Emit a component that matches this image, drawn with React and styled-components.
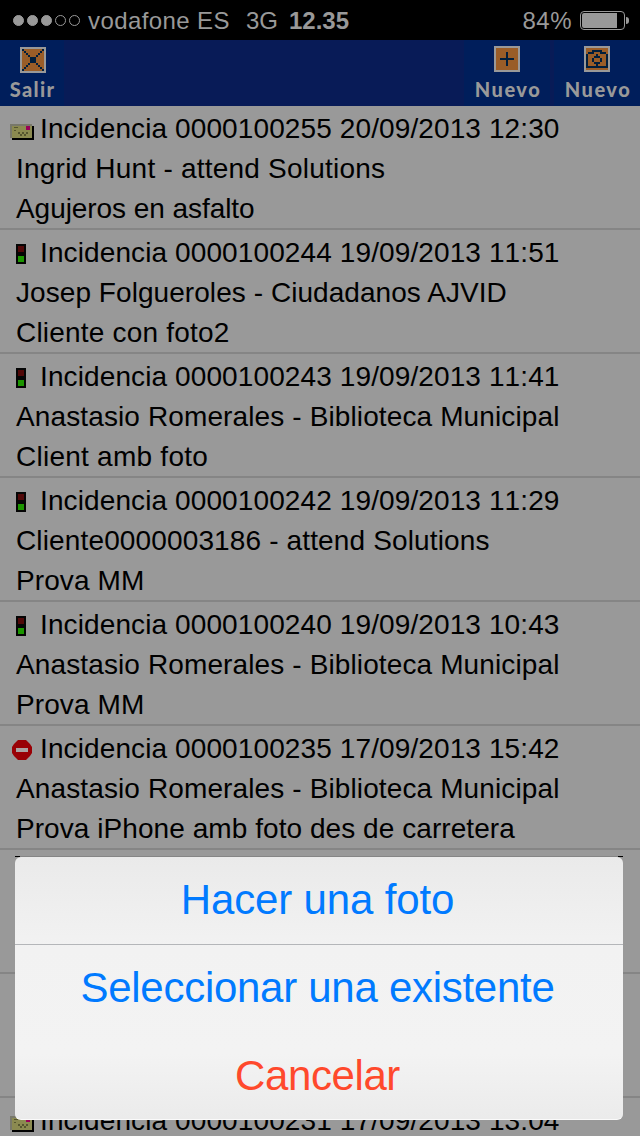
// react
import React from 'react';
// styled components
import styled, { createGlobalStyle } from 'styled-components';

// DATA
const incidents = [
    { id: '0000100255', date: '20/09/2013 12:30', icon: 'mail', client: 'Ingrid Hunt - attend Solutions', clientGap: 0.22, note: 'Agujeros en asfalto', noteGap: -0.06 },
    { id: '0000100244', date: '19/09/2013 11:51', icon: 'light', client: 'Josep Folgueroles - Ciudadanos AJVID', clientGap: 0.06, note: 'Cliente con foto2', noteGap: 0.2 },
    { id: '0000100243', date: '19/09/2013 11:41', icon: 'light', client: 'Anastasio Romerales - Biblioteca Municipal', clientGap: 0.12, note: 'Client amb foto', noteGap: 0.25 },
    { id: '0000100242', date: '19/09/2013 11:29', icon: 'light', client: 'Cliente0000003186 - attend Solutions', clientGap: 0.14, note: 'Prova MM', noteGap: 0.1 },
    { id: '0000100240', date: '19/09/2013 10:43', icon: 'light', client: 'Anastasio Romerales - Biblioteca Municipal', clientGap: 0.12, note: 'Prova MM', noteGap: 0.1 },
    { id: '0000100235', date: '17/09/2013 15:42', icon: 'stop', client: 'Anastasio Romerales - Biblioteca Municipal', clientGap: 0.12, note: 'Prova iPhone amb foto des de carretera', noteGap: 0.06 },
    { id: null },
    { id: null },
    { id: '0000100231', date: '17/09/2013 13:04', icon: 'mail' },
];

// ICONS
const MailIcon = () => (
    <svg width="24" height="16" shapeRendering="crispEdges">
        <path d="M2 2h22v14H2z" fill="#000" />
        <path d="M0 0h22v14H0z" fill="#8b8a50" />
        <path d="M0 0h22v2H0zM0 0h2v14H0z" fill="#78786a" />
        <path d="M16 2h4v4h-4z" fill="#990057" />
        <path d="M4 3h4v1H4zM4 6h2v1H4zM8 8h2v2H8zM12 8h2v2h-2zM16 8h2v2h-2zM10 10h2v2h-2zM14 10h2v2h-2z" fill="#55552f" />
    </svg>
);

const LightIcon = () => (
    <svg width="10" height="20" shapeRendering="crispEdges">
        <path d="M0 0h10v20H0z" fill="#050505" />
        <path d="M2 2h6v6H2z" fill="#510808" />
        <path d="M2 12h6v6H2z" fill="#1c9600" />
    </svg>
);

const StopIcon = () => (
    <svg width="20" height="20">
        <path d="M6 0h8l2 2 2 2 2 3v6l-2 3-2 2-2 2H6l-2-2-2-2-2-3V7l2-3 2-2z" fill="#990005" />
        <path d="M4 8h12v4H4z" fill="#aaa1a1" />
    </svg>
);

const rowIcons = { mail: MailIcon, light: LightIcon, stop: StopIcon };

const ExitIcon = () => (
    <svg width="26" height="26" shapeRendering="crispEdges">
        <path d="M0 0h26v26H0z" fill="#999" />
        <path d="M2 2h22v22H2z" fill="#995d28" />
        <path
            d="M2 2h2v2H2zM4 4h2v2H4zM6 6h2v2H6zM8 8h2v2H8zM22 2h2v2h-2zM20 4h2v2h-2zM18 6h2v2h-2zM16 8h2v2h-2zM10 10h6v6h-6zM8 16h2v2H8zM6 18h2v2H6zM4 20h2v2H4zM2 22h2v2H2zM16 16h2v2h-2zM18 18h2v2h-2zM20 20h2v2h-2zM22 22h2v2h-2z"
            fill="#001e3c"
        />
    </svg>
);

const PlusIcon = () => (
    <svg width="26" height="26" shapeRendering="crispEdges">
        <path d="M0 0h26v26H0z" fill="#999" />
        <path d="M2 2h22v22H2z" fill="#995d28" />
        <path d="M12 6h2v14h-2zM6 12h14v2H6z" fill="#001e3c" />
    </svg>
);

const CameraIcon = () => (
    <svg width="26" height="26" shapeRendering="crispEdges">
        <path d="M0 0h26v26H0z" fill="#999" />
        <path d="M2 2h22v22H2z" fill="#995d28" />
        <path
            d="M8 4h10v2H8zM4 6h6v2H4zM16 6h6v2h-6zM2 8h2v14H2zM22 8h2v14h-2zM4 20h18v2H4zM10 10h6v2h-6zM8 12h2v4H8zM16 12h2v4h-2zM10 16h6v2h-6zM12 8h2v2h-2zM12 18h2v2h-2z"
            fill="#001e3c"
        />
    </svg>
);

// COMPONENT
const App = () => {
    return (
        <Screen>
            <GlobalStyle />
            <StatusBar>
                <Signal>
                    {[1, 1, 1, 0, 0].map((on, i) => (
                        <Dot key={i} $on={on} />
                    ))}
                </Signal>
                <Carrier>vodafone ES</Carrier>
                <Network>3G</Network>
                <Clock>12.35</Clock>
                <Percent>84%</Percent>
                <Battery>
                    <BatteryLevel />
                </Battery>
                <BatteryTip />
            </StatusBar>
            <Toolbar>
                <ToolButton $width={64} $top={7} $indent={2}>
                    <ExitIcon />
                    <ToolLabel $spacing={1.3} $top={4} $right={1}>Salir</ToolLabel>
                </ToolButton>
                <Spacer />
                <ToolButton $width={86} $top={6}>
                    <PlusIcon />
                    <ToolLabel $spacing={1.5} $top={5} $left={2}>Nuevo</ToolLabel>
                </ToolButton>
                <ToolButton $width={86} $top={6}>
                    <CameraIcon />
                    <ToolLabel $spacing={1.5} $top={5} $left={2}>Nuevo</ToolLabel>
                </ToolButton>
            </Toolbar>
            <List>
                {incidents.map((incident, i) => {
                    const Icon = rowIcons[incident.icon];
                    return (
                        <Row key={i}>
                            {incident.id && (
                                <Title>
                                    <IconSlot $kind={incident.icon}><Icon /></IconSlot>
                                    <Line>Incidencia {incident.id} {incident.date}</Line>
                                </Title>
                            )}
                            <Detail $spacing={incident.clientGap}>{incident.client}</Detail>
                            <Detail $spacing={incident.noteGap}>{incident.note}</Detail>
                        </Row>
                    );
                })}
            </List>
            <SheetEdge />
            <ActionSheet>
                <Action $height={87} $spacing={-0.15}>Hacer una foto</Action>
                <Action $height={89} $divided $spacing={-0.28}>Seleccionar una existente</Action>
                <Action $height={87} $danger $spacing={-0.4}>Cancelar</Action>
            </ActionSheet>
        </Screen>
    );
};

// STYLED COMPONENTS
const GlobalStyle = createGlobalStyle`
    body {
        margin: 0;
        overflow: hidden;
        background: #999;
    }

    * {
        box-sizing: border-box;
    }

    svg {
        display: block;
        flex: none;
    }
`

const Screen = styled.div`
    position: relative;
    width: 640px;
    height: 1136px;
    overflow: hidden;
    background: #999;
    color: #000;
    font-family: "Liberation Sans", Arial, sans-serif;
`

const StatusBar = styled.div`
    height: 40px;
    padding: 1px 11px 0 13px;
    display: flex;
    align-items: center;
    background: #000;
    color: #999;
    font-size: 24px;
    white-space: nowrap;
`

const Signal = styled.div`
    width: 75px;
    display: flex;
    gap: 3px;
`

const Dot = styled.span`
    width: 11px;
    height: 11px;
    border: 1px solid #999;
    border-radius: 50%;
    background: ${props => (props.$on ? '#999' : 'transparent')};
`

const Carrier = styled.span`
    width: 158px;
    letter-spacing: 0.4px;
`

const Network = styled.span`
    width: 43px;
`

const Clock = styled.span`
    font-weight: bold;
`

const Percent = styled.span`
    margin-left: auto;
    margin-right: 8px;
    letter-spacing: 0.5px;
`

const Battery = styled.div`
    width: 45px;
    height: 19px;
    padding: 1px;
    border: 1px solid #999;
    border-radius: 4px;
`

const BatteryLevel = styled.div`
    width: 35px;
    height: 15px;
    border-radius: 2px 0 0 2px;
    background: #999;
`

const BatteryTip = styled.div`
    width: 3px;
    height: 7px;
    margin-left: 1px;
    border-radius: 0 3px 3px 0;
    background: #999;
`

const Toolbar = styled.div`
    height: 66px;
    display: flex;
    gap: 4px;
    background: #081b57;
`

const Spacer = styled.div`
    flex: 1;
`

const ToolButton = styled.div`
    width: ${props => props.$width}px;
    padding: ${props => props.$top}px 0 0 ${props => props.$indent || 0}px;
    display: flex;
    flex-direction: column;
    align-items: center;
    background: #001e5b;
`

const ToolLabel = styled.span`
    margin: ${props => props.$top}px ${props => props.$right || 0}px 0 ${props => props.$left || 0}px;
    color: #999;
    font: 900 20px/24px Lato, sans-serif;
    letter-spacing: ${props => props.$spacing}px;
`

const List = styled.div`
    display: flex;
    flex-direction: column;
`

const Row = styled.div`
    height: 124px;
    border-bottom: 2px solid #858585;
    padding-top: 3px;
    font-size: 28px;
    line-height: 40px;
    white-space: nowrap;
`

const Title = styled.div`
    height: 40px;
    display: flex;
`

const IconSlot = styled.div`
    width: 40px;
    padding: ${props => ({ mail: '15px 0 0 10px', light: '11px 0 0 16px', stop: '11px 0 0 12px' }[props.$kind])};
`

const Line = styled.span`
    font-kerning: none;
    letter-spacing: 0.11px;
`

const Detail = styled.div`
    height: 40px;
    padding-left: 16px;
    letter-spacing: ${props => props.$spacing || 0}px;
`

// dark corner ticks just above the sheet
const SheetEdge = styled.div`
    position: absolute;
    left: 15px;
    top: 856px;
    width: 608px;
    height: 1px;
    border: solid #000;
    border-width: 0 5px;
    background: #858585;
`

const ActionSheet = styled.div`
    position: absolute;
    left: 15px;
    top: 857px;
    width: 608px;
    height: 263px;
    border-radius: 6px;
    border-bottom: 1px solid #fafafa;
    background: linear-gradient(#eaeaea, #f2f2f2 35%, #f3f3f3 75%, #ebebeb);
    overflow: hidden;
`

const Action = styled.div`
    height: ${props => props.$height}px;
    padding-right: 3px;
    text-align: center;
    line-height: 86px;
    font-size: 42px;
    letter-spacing: ${props => props.$spacing}px;
    color: ${props => (props.$danger ? '#ff492c' : '#007aff')};
    border-top: ${props => (props.$divided ? '1px solid #b4b6b9' : 'none')};
`

// EXPORT
export default App;
